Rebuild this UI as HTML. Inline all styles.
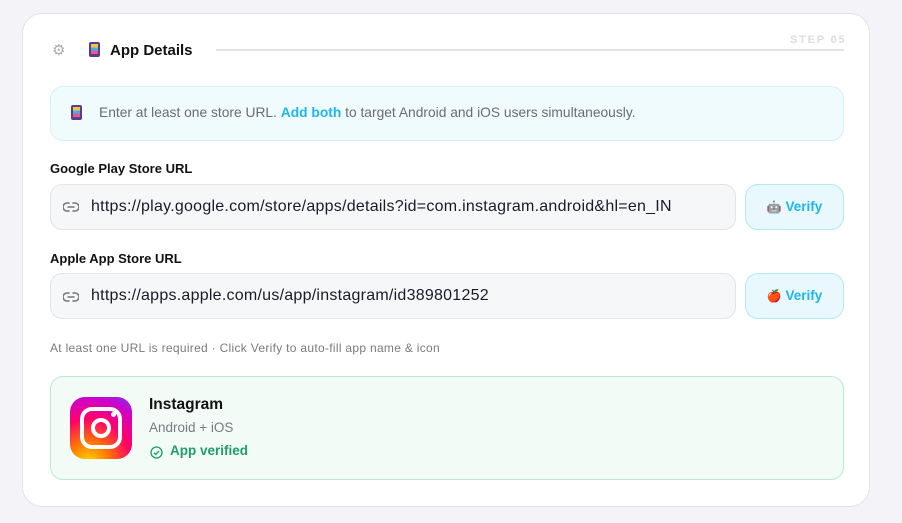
<!DOCTYPE html>
<html><head><meta charset="utf-8"><style>
*{box-sizing:border-box;margin:0;padding:0}
body{width:902px;height:523px;background:#f4f4f8;font-family:"Liberation Sans",sans-serif;position:relative;overflow:hidden}
.card{position:absolute;left:22px;top:13px;width:848px;height:494px;background:#fff;border:1px solid #e2e2e8;border-radius:20px}
.abs{position:absolute}
.title{left:87px;top:28px;font-size:15px;font-weight:bold;color:#111}
.line{left:193px;top:35px;width:628px;height:2px;background:#e2e2e6}
.step{left:767px;top:20px;font-size:11px;font-weight:bold;letter-spacing:1.8px;color:#dcdde3}
.info{left:27px;top:72px;width:794px;height:55px;background:#f0fbfe;border:1px solid #d6f1f8;border-radius:13px;font-size:13.8px;color:#6b6b73;padding:18px 0 0 48px}
.info b{color:#1fb6ec}
.lbl{left:27px;font-size:13px;font-weight:bold;color:#111}
.inp{left:27px;width:686px;height:46px;background:#f6f7f9;border:1px solid #e3e4e8;border-radius:12px;font-size:16px;letter-spacing:0.25px;color:#1a1a2a;padding:13px 0 0 40px;white-space:nowrap}
.btn{left:722px;width:99px;height:46px;background:#e8f8fd;border:1px solid #b2e8f8;border-radius:13px;color:#1fb6ec;font-weight:bold;font-size:13.5px;text-align:center;line-height:44px}
.hint{left:27px;top:327px;font-size:12px;letter-spacing:0.3px;color:#7a7a82;white-space:nowrap}
.app{left:27px;top:362px;width:794px;height:104px;background:#f3fbf7;border:1px solid #b9ebd2;border-radius:13px}
.ig{left:19px;top:20px;width:62px;height:62px;border-radius:15px;background:radial-gradient(circle at 30% 105%,#ffd600 0%,#ff7a00 25%,#ff0069 55%,#d300c5 80%,#7638fa 100%)}
.em{font-size:12px}
</style></head><body>
<div class="card">
 <div class="abs" style="left:29px;top:27px;font-size:15px;color:#aaa">⚙</div>
 <div class="abs em" style="left:66px;top:28px;width:11px;height:15px;background:#5d3c8e;border-radius:2px;padding:2px"><div style="width:7px;height:10px;background:linear-gradient(#f5c542 33%,#3fb3e8 33%,#3fb3e8 66%,#e65a8a 66%)"></div></div>
 <div class="abs title">App Details</div>
 <div class="abs line"></div>
 <div class="abs step">STEP 05</div>
 <div class="abs info">Enter at least one store URL. <b>Add both</b> to target Android and iOS users simultaneously.</div>
 <div class="abs" style="left:48px;top:91px;width:11px;height:15px;background:#5d3c8e;border-radius:2px;padding:2px"><div style="width:7px;height:10px;background:linear-gradient(#f5c542 33%,#3fb3e8 33%,#3fb3e8 66%,#e65a8a 66%)"></div></div>
 <div class="abs lbl" style="top:147px">Google Play Store URL</div>
 <div class="abs inp" style="top:170px">https://play.google.com/store/apps/details?id=com.instagram.android&amp;hl=en_IN</div>
 <svg class="abs" style="left:40px;top:188px" width="16" height="10" viewBox="0 0 16 10"><path d="M6 1H4a4 4 0 0 0 0 8h2M10 1h2a4 4 0 0 1 0 8h-2M5 5h6" fill="none" stroke="#777" stroke-width="1.6" stroke-linecap="round"/></svg>
 <div class="abs btn" style="top:170px"><span class="em">🤖</span> Verify</div>
 <div class="abs lbl" style="top:237px">Apple App Store URL</div>
 <div class="abs inp" style="top:259px">https://apps.apple.com/us/app/instagram/id389801252</div>
 <svg class="abs" style="left:40px;top:278px" width="16" height="10" viewBox="0 0 16 10"><path d="M6 1H4a4 4 0 0 0 0 8h2M10 1h2a4 4 0 0 1 0 8h-2M5 5h6" fill="none" stroke="#777" stroke-width="1.6" stroke-linecap="round"/></svg>
 <div class="abs btn" style="top:259px"><span class="em">🍎</span> Verify</div>
 <div class="abs hint">At least one URL is required · Click Verify to auto-fill app name &amp; icon</div>
 <div class="abs app">
  <div class="abs ig"><div class="abs" style="left:10px;top:10px;width:42px;height:42px;border:4px solid #fff;border-radius:12px"></div><div class="abs" style="left:21px;top:21px;width:20px;height:20px;border:4px solid #fff;border-radius:50%"></div><div class="abs" style="left:41px;top:15px;width:5px;height:5px;background:#fff;border-radius:50%"></div></div>
  <div class="abs" style="left:98px;top:19px;font-size:15.5px;font-weight:bold;color:#111">Instagram</div>
  <div class="abs" style="left:98px;top:43px;font-size:13.5px;color:#7a7a82">Android + iOS</div>
  <svg class="abs" style="left:99px;top:69px" width="13" height="13" viewBox="0 0 13 13"><circle cx="6.5" cy="6.5" r="5.5" fill="none" stroke="#1e9e6a" stroke-width="1.3"/><path d="M4 6.7l1.8 1.8L9 5" fill="none" stroke="#1e9e6a" stroke-width="1.3"/></svg>
  <div class="abs" style="left:119px;top:66px;font-size:13.5px;font-weight:bold;color:#1e9e6a">App verified</div>
 </div>
</div>
</body></html>
